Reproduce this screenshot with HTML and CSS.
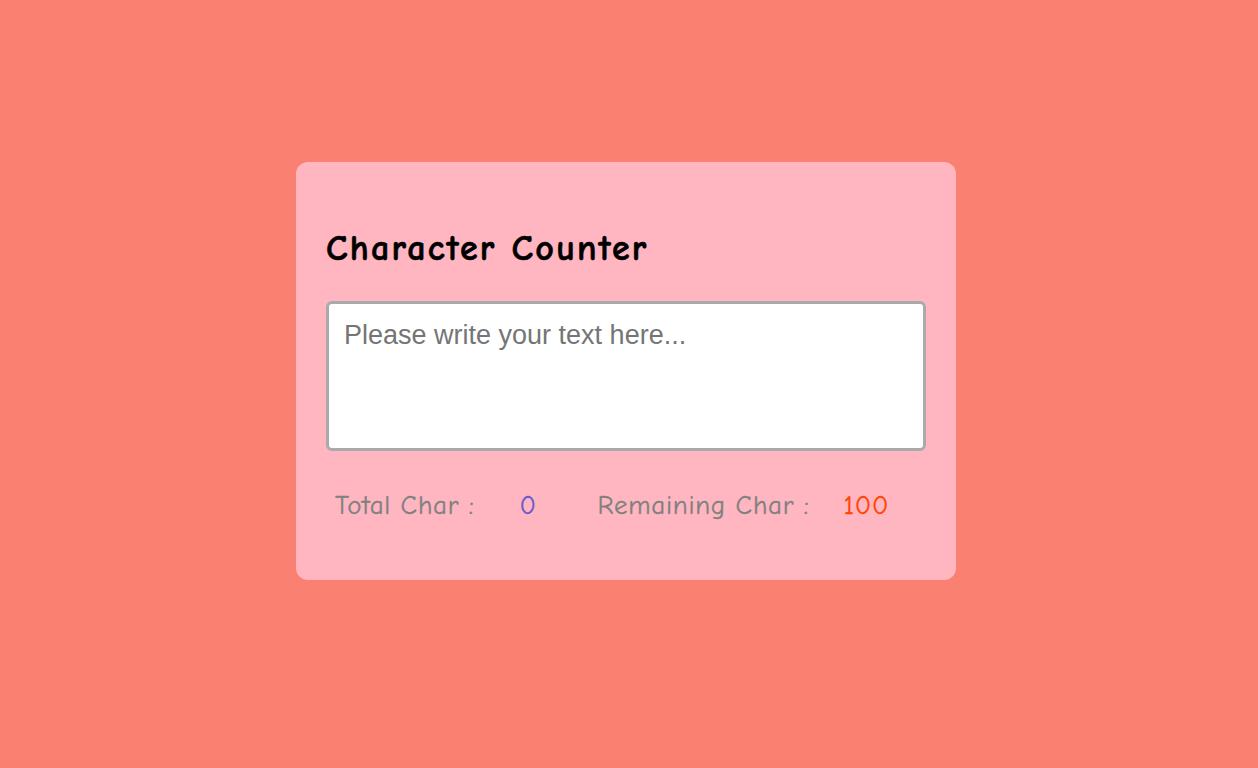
FILE: index.html
```html
<!DOCTYPE html>
<html lang="en">
<head>
<meta charset="UTF-8">
<title>Character Counter</title>
<link rel="stylesheet" href="styles.css">
</head>
<body>
  <main class="card">
    <h1 class="title">Character Counter</h1>
    <textarea class="input" placeholder="Please write your text here..." maxlength="100"></textarea>
    <div class="stats">
      <span class="label">Total Char :</span>
      <span class="value total">0</span>
      <span class="label remaining-label">Remaining Char :</span>
      <span class="value remaining">100</span>
    </div>
  </main>
</body>
</html>
```

FILE: styles.css
```css
html, body {
  margin: 0;
  padding: 0;
}

body {
  background: #fa8072;
  min-height: 768px;
  display: flex;
  justify-content: center;
  align-items: flex-start;
  padding-top: 162px;
  padding-right: 6px;
  box-sizing: border-box;
  font-family: "Comic Sans MS", "Comic Neue", "Open Sans", sans-serif;
}

.card {
  width: 660px;
  box-sizing: border-box;
  background: #ffb6c1;
  border-radius: 12px;
  padding: 66px 30px 58px;
}

.title {
  margin: 0 0 31px;
  font-size: 36px;
  line-height: 42px;
  font-weight: 700;
  letter-spacing: 2.2px;
  color: #000;
  -webkit-text-stroke: 0.6px #000;
}

.input {
  display: block;
  width: 600px;
  height: 150px;
  box-sizing: border-box;
  border: 3px solid #aaaaaa;
  border-radius: 6px;
  background: #fff;
  padding: 16px 15px 12px;
  font-family: "Liberation Sans", Arial, sans-serif;
  font-size: 27px;
  resize: none;
  outline: none;
  margin: 0 0 39px;
}

.input::placeholder {
  color: #757575;
}

.stats {
  display: flex;
  align-items: baseline;
  padding-left: 9px;
  font-size: 27px;
  line-height: 32px;
  letter-spacing: 0.7px;
  -webkit-text-stroke: 0.3px currentColor;
}

.label {
  color: #808080;
}

.value.total {
  color: #6a5acd;
  margin-left: 45px;
}

.remaining-label {
  margin-left: 61px;
}

.value.remaining {
  color: #ff4500;
  margin-left: 34px;
}
```
